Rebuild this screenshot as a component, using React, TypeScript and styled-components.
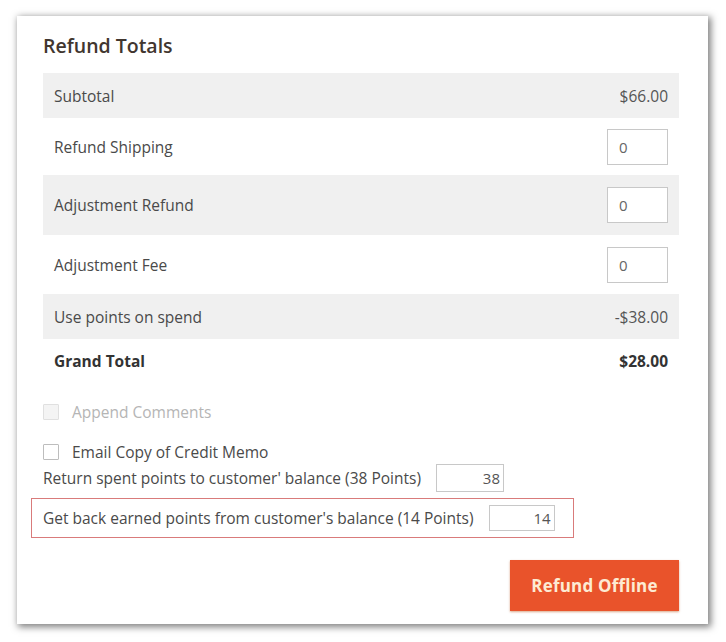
import React from "react";
import styled, { createGlobalStyle } from "styled-components";

const Global = createGlobalStyle`
  html, body { margin: 0; padding: 0; background: #ffffff; }
  body { font-family: "Open Sans", "Noto Sans", sans-serif; color: #41362f; }
  * { box-sizing: border-box; }
`;

const Page = styled.div`
  width: 726px;
  height: 642px;
  padding: 16px 0 0 17px;
`;

const Card = styled.div`
  width: 691px;
  height: 608px;
  background: #fff;
  box-shadow: 2px 2px 7px 1px rgba(0, 0, 0, 0.5);
  padding: 16px 29px 0 26px;
  display: flex;
  flex-direction: column;
`;

const Title = styled.h2`
  margin: 0;
  font-size: 19.5px;
  font-weight: 600;
  color: #41362f;
  line-height: 28px;
  height: 41px;
`;

const Table = styled.div`
  display: flex;
  flex-direction: column;
  width: 636px;
`;

const Row = styled.div<{ $h: number; $shade?: boolean }>`
  height: ${(p) => p.$h}px;
  background: ${(p) => (p.$shade ? "#f0f0f0" : "#fff")};
  display: flex;
  align-items: center;
  justify-content: space-between;
  padding: 0 11px;
  font-size: 15.5px;
  color: #4a4a4a;
`;

const Label = styled.span<{ $bold?: boolean }>`
  font-weight: ${(p) => (p.$bold ? 700 : 400)};
  color: ${(p) => (p.$bold ? "#333" : "#4a4a4a")};
`;

const Amount = styled.span<{ $bold?: boolean }>`
  font-weight: ${(p) => (p.$bold ? 700 : 400)};
  color: ${(p) => (p.$bold ? "#333" : "#555")};
`;

const SmallInput = styled.div`
  width: 61px;
  height: 36px;
  border: 1px solid #c8c8c8;
  background: #fff;
  display: flex;
  align-items: center;
  padding-left: 11px;
  font-size: 15px;
  color: #666;
`;

const CheckRow = styled.div<{ $disabled?: boolean; $mt: number }>`
  display: flex;
  align-items: center;
  gap: 13px;
  margin-top: ${(p) => p.$mt}px;
  font-size: 15.5px;
  color: ${(p) => (p.$disabled ? "#b5b5b5" : "#4a4a4a")};
  height: 18px;
`;

const Box = styled.span<{ $disabled?: boolean }>`
  width: 16px;
  height: 16px;
  border: 1px solid ${(p) => (p.$disabled ? "#e0e0e0" : "#bdbdbd")};
  background: ${(p) => (p.$disabled ? "#f4f4f4" : "#fff")};
  border-radius: 1px;
`;

const PointsRow = styled.div<{ $highlight?: boolean; $mt: number }>`
  display: flex;
  align-items: center;
  gap: 15px;
  margin-top: ${(p) => p.$mt}px;
  font-size: 15.5px;
  color: #4a4a4a;
  ${(p) =>
    p.$highlight
      ? `
    width: 543px;
    height: 40px;
    margin-left: -12px;
    padding-left: 11px;
    border: 1.5px solid #d97b7b;
  `
      : `height: 28px;`}
`;

const PointsInput = styled.div<{ $w: number; $h: number }>`
  width: ${(p) => p.$w}px;
  height: ${(p) => p.$h}px;
  border: 1px solid #c8c8c8;
  background: #fff;
  display: flex;
  align-items: center;
  justify-content: flex-end;
  padding-right: 3px;
  font-size: 15px;
  color: #555;
`;

const Actions = styled.div`
  display: flex;
  justify-content: flex-end;
  width: 636px;
  margin-top: 22px;
`;

const Button = styled.button`
  width: 169px;
  height: 51px;
  border: none;
  background: #e9532b;
  color: #fdebd3;
  font-family: "Open Sans", "Noto Sans", sans-serif;
  font-size: 17px;
  font-weight: 700;
  letter-spacing: 0.2px;
  box-shadow: 0 1px 2px rgba(180, 80, 20, 0.5);
`;

export default function App() {
  return (
    <>
      <Global />
      <Page>
        <Card>
          <Title>Refund Totals</Title>
          <Table>
            <Row $h={45} $shade>
              <Label>Subtotal</Label>
              <Amount>$66.00</Amount>
            </Row>
            <Row $h={57}>
              <Label>Refund Shipping</Label>
              <SmallInput>0</SmallInput>
            </Row>
            <Row $h={60} $shade>
              <Label>Adjustment Refund</Label>
              <SmallInput>0</SmallInput>
            </Row>
            <Row $h={59}>
              <Label>Adjustment Fee</Label>
              <SmallInput>0</SmallInput>
            </Row>
            <Row $h={45} $shade>
              <Label>Use points on spend</Label>
              <Amount>-$38.00</Amount>
            </Row>
            <Row $h={43}>
              <Label $bold>Grand Total</Label>
              <Amount $bold>$28.00</Amount>
            </Row>
          </Table>
          <CheckRow $disabled $mt={21}>
            <Box $disabled />
            Append Comments
          </CheckRow>
          <CheckRow $mt={22}>
            <Box />
            Email Copy of Credit Memo
          </CheckRow>
          <PointsRow $mt={3}>
            Return spent points to customer' balance (38 Points)
            <PointsInput $w={68} $h={28}>38</PointsInput>
          </PointsRow>
          <PointsRow $highlight $mt={6}>
            Get back earned points from customer's balance (14 Points)
            <PointsInput $w={66} $h={26}>14</PointsInput>
          </PointsRow>
          <Actions>
            <Button>Refund Offline</Button>
          </Actions>
        </Card>
      </Page>
    </>
  );
}
